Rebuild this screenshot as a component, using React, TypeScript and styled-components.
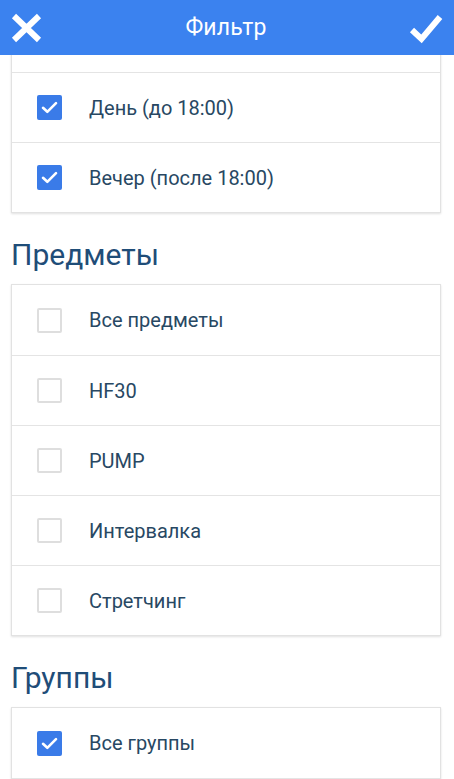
import { useLayoutEffect, useRef, useState } from 'react'
import styled, { createGlobalStyle } from 'styled-components'

const GlobalStyle = createGlobalStyle`
  html, body {
    margin: 0;
    padding: 0;
    background: #ffffff;
    font-family: Roboto, "Noto Sans", "Liberation Sans", sans-serif;
  }
  * {
    box-sizing: border-box;
  }
`

const Screen = styled.div`
  width: 454px;
  height: 779px;
  display: flex;
  flex-direction: column;
  overflow: hidden;
  background: #ffffff;
`

const TopBar = styled.header`
  height: 55px;
  flex: none;
  background: #3b82ef;
  display: flex;
  align-items: center;
  justify-content: space-between;
  padding: 0 11px 0 9px;
`

const BarTitle = styled.h1`
  margin: 0;
  font-size: 23px;
  font-weight: 400;
  color: #ffffff;
  letter-spacing: 0.2px;
`

const IconButton = styled.button`
  width: 34px;
  height: 34px;
  padding: 0;
  border: none;
  background: transparent;
  display: flex;
  align-items: center;
  justify-content: center;
  cursor: pointer;
`

const ScrollArea = styled.div`
  position: relative;
  flex: 1;
  overflow-y: auto;
  scrollbar-width: none;
  &::-webkit-scrollbar {
    display: none;
  }
`

const Content = styled.div`
  padding: 0 13px 40px 11px;
`

const SectionTitle = styled.h2`
  margin: 25px 0 12px;
  font-size: 30px;
  line-height: 34px;
  font-weight: 400;
  color: #1f4d78;
`

const Card = styled.div`
  border: 1px solid #e2e2e2;
  box-shadow: 0 1px 2px rgba(0, 0, 0, 0.12);
  background: #ffffff;
`

const Row = styled.label`
  height: 70px;
  display: flex;
  align-items: center;
  gap: 27px;
  padding: 0 0 0 25px;
  cursor: pointer;
  & + & {
    border-top: 1px solid #e4e4e4;
  }
`

const Box = styled.span<{ $checked: boolean }>`
  width: 25px;
  height: 25px;
  flex: none;
  border-radius: 2px;
  display: flex;
  align-items: center;
  justify-content: center;
  background: ${({ $checked }) => ($checked ? '#3a7be8' : '#ffffff')};
  border: ${({ $checked }) => ($checked ? 'none' : '2px solid #dedede')};
`

const RowText = styled.span`
  font-size: 20px;
  color: #284863;
`

type Item = { label: string; checked: boolean }
type Section = { title: string; items: Item[] }

const initialSections: Section[] = [
  {
    title: 'Время',
    items: [
      { label: 'Утро (до 12:00)', checked: false },
      { label: 'День (до 18:00)', checked: true },
      { label: 'Вечер (после 18:00)', checked: true },
    ],
  },
  {
    title: 'Предметы',
    items: [
      { label: 'Все предметы', checked: false },
      { label: 'HF30', checked: false },
      { label: 'PUMP', checked: false },
      { label: 'Интервалка', checked: false },
      { label: 'Стретчинг', checked: false },
    ],
  },
  {
    title: 'Группы',
    items: [
      { label: 'Все группы', checked: true },
      { label: 'Утренняя группа', checked: false },
      { label: 'Вечерняя группа', checked: false },
    ],
  },
]

function CheckMark() {
  return (
    <svg width="17" height="13" viewBox="0 0 17 13">
      <path
        d="M2 6.8 L6.3 10.8 L15 2.2"
        fill="none"
        stroke="#ffffff"
        strokeWidth="2.6"
        strokeLinecap="round"
        strokeLinejoin="round"
      />
    </svg>
  )
}

export default function App() {
  const [sections, setSections] = useState(initialSections)
  const scrollRef = useRef<HTMLDivElement>(null)
  const anchorRef = useRef<HTMLLabelElement>(null)

  // the list is shown scrolled so the "День" row sits just under the bar
  useLayoutEffect(() => {
    if (scrollRef.current && anchorRef.current) {
      scrollRef.current.scrollTop = anchorRef.current.offsetTop - 17
    }
  }, [])

  const toggle = (s: number, i: number) => {
    setSections((prev) =>
      prev.map((sec, si) =>
        si !== s
          ? sec
          : {
              ...sec,
              items: sec.items.map((it, ii) =>
                ii === i ? { ...it, checked: !it.checked } : it,
              ),
            },
      ),
    )
  }

  return (
    <>
      <GlobalStyle />
      <Screen>
        <TopBar>
          <IconButton aria-label="Закрыть">
            <svg width="33" height="32" viewBox="0 0 33 32">
              <path
                d="M4 4 L29 28 M29 4 L4 28"
                stroke="#ffffff"
                strokeWidth="6"
                strokeLinecap="butt"
              />
            </svg>
          </IconButton>
          <BarTitle>Фильтр</BarTitle>
          <IconButton aria-label="Применить">
            <svg width="34" height="32" viewBox="0 0 34 32">
              <path
                d="M3 18 L12.5 27 L31 5"
                fill="none"
                stroke="#ffffff"
                strokeWidth="6"
                strokeLinejoin="miter"
              />
            </svg>
          </IconButton>
        </TopBar>
        <ScrollArea ref={scrollRef}>
          <Content>
            {sections.map((sec, s) => (
              <div key={sec.title}>
                <SectionTitle>{sec.title}</SectionTitle>
                <Card>
                  {sec.items.map((it, i) => (
                    <Row
                      key={it.label}
                      ref={s === 0 && i === 1 ? anchorRef : undefined}
                      onClick={() => toggle(s, i)}>
                      <Box $checked={it.checked}>{it.checked && <CheckMark />}</Box>
                      <RowText>{it.label}</RowText>
                    </Row>
                  ))}
                </Card>
              </div>
            ))}
          </Content>
        </ScrollArea>
      </Screen>
    </>
  )
}
